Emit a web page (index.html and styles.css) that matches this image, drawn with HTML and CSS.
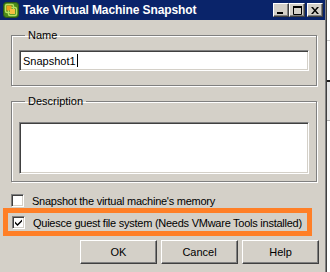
FILE: index.html
```html
<!DOCTYPE html>
<html lang="en">
<head>
    <meta charset="UTF-8">
    <title>Take Virtual Machine Snapshot</title>
    <link rel="stylesheet" href="styles.css">
</head>
<body>
    <div class="screen">
        <div class="window">
            <div class="titlebar">
                <svg class="app-icon" width="16" height="16" viewBox="0 0 16 16">
                    <rect x="0.5" y="0.5" width="15" height="15" rx="3" fill="#4a8a1c" stroke="#2e5a10"/>
                    <rect x="2.5" y="2.5" width="8" height="8" rx="1.5" fill="none" stroke="#b8e060" stroke-width="1.4"/>
                    <rect x="5.5" y="5.5" width="8" height="8" rx="1.5" fill="none" stroke="#b8e060" stroke-width="1.4"/>
                    <rect x="3.5" y="3.5" width="5" height="5" fill="#f0a020"/>
                    <rect x="7" y="7" width="5" height="5" fill="#f7c040"/>
                </svg>
                <span class="title">Take Virtual Machine Snapshot</span>
                <div class="caption-buttons">
                    <span class="cap-btn">
                        <svg width="8" height="8" viewBox="0 0 8 8"><rect x="0" y="6" width="6" height="2" fill="#000"/></svg>
                    </span>
                    <span class="cap-btn">
                        <svg width="9" height="9" viewBox="0 0 9 9"><path d="M0.5 1.5h8v7h-8z" fill="none" stroke="#000"/><rect x="0" y="0" width="9" height="2" fill="#000"/></svg>
                    </span>
                    <span class="cap-btn close">
                        <svg width="8" height="7" viewBox="0 0 8 7"><path d="M0 0h2l2 2.5 2-2.5h2l-3 3.5 3 3.5h-2l-2-2.5-2 2.5h-2l3-3.5z" fill="#000"/></svg>
                    </span>
                </div>
            </div>
            <div class="client">
                <fieldset class="group name-group">
                    <legend>Name</legend>
                    <div class="field">Snapshot1<span class="caret"></span></div>
                </fieldset>
                <fieldset class="group desc-group">
                    <legend>Description</legend>
                    <div class="field area"></div>
                </fieldset>
                <div class="check">
                    <span class="box"></span>
                    <span>Snapshot the virtual machine's memory</span>
                </div>
                <div class="highlight">
                    <div class="check">
                        <span class="box">
                            <svg width="7" height="7" viewBox="0 0 7 7"><path d="M0 2.5l2.5 2.5 4.5-4.5v2l-4.5 4.5-2.5-2.5z" fill="#000"/></svg>
                        </span>
                        <span>Quiesce guest file system (Needs VMware Tools installed)</span>
                    </div>
                </div>
                <div class="actions">
                    <span class="btn">OK</span>
                    <span class="btn">Cancel</span>
                    <span class="btn">Help</span>
                </div>
            </div>
        </div>
        <div class="backdrop"></div>
    </div>
</body>
</html>
```

FILE: styles.css
```css
body {
    margin: 0;
    font-family: "Liberation Sans", Arial, sans-serif;
    font-size: 11px;
    color: #000;
    background-color: #fff;
}
.screen {
    display: flex;
    height: 272px;
    overflow: hidden;
}
.window {
    width: 325px;
    height: 272px;
    background-color: #d4d0c8;
    border-right: 1px solid #404040;
    box-shadow: inset -1px 0 0 #808080;
    padding-right: 1px;
}
.backdrop {
    flex: 1;
    background: linear-gradient(#fff 0 40px, #c8c8c8 40px 41px, #fff 41px 80px, #202020 80px 82px, #e8e8e8 82px 120px, #b0b0b0 120px 121px, #fff 121px);
}
.titlebar {
    height: 20px;
    background-color: #0a246a;
    display: flex;
    align-items: center;
    padding-left: 3px;
}
.app-icon {
    margin-right: 4px;
}
.title {
    color: #fff;
    font-weight: bold;
    font-size: 12px;
    letter-spacing: -0.1px;
    flex: 1;
    white-space: nowrap;
}
.caption-buttons {
    display: flex;
    margin-right: 2px;
}
.cap-btn {
    width: 16px;
    height: 14px;
    box-sizing: border-box;
    background-color: #d4d0c8;
    border-top: 1px solid #fff;
    border-left: 1px solid #fff;
    border-right: 1px solid #404040;
    border-bottom: 1px solid #404040;
    box-shadow: inset -1px -1px 0 #808080;
    display: flex;
    align-items: center;
    justify-content: center;
}
.cap-btn.close {
    margin-left: 2px;
}
.client {
    padding: 9px 0 0 11px;
}
.group {
    width: 306px;
    box-sizing: border-box;
    margin: 0;
    border: 1px solid #808080;
    box-shadow: inset 1px 1px 0 #fff, 1px 1px 0 #fff;
    padding: 8px 7px 14px 7px;
}
.group legend {
    padding: 0 3px;
    margin-left: 6px;
    line-height: 13px;
}
.desc-group {
    margin-top: 9px;
    padding: 14px 7px 7px 7px;
}
.field {
    height: 21px;
    box-sizing: border-box;
    background-color: #fff;
    border-top: 1px solid #808080;
    border-left: 1px solid #808080;
    border-right: 1px solid #fff;
    border-bottom: 1px solid #fff;
    box-shadow: inset 1px 1px 0 #404040, inset -1px -1px 0 #d4d0c8;
    padding: 3px 4px 0 3px;
    line-height: 14px;
}
.field.area {
    height: 52px;
}
.caret {
    display: inline-block;
    width: 1px;
    height: 13px;
    background-color: #000;
    vertical-align: top;
    margin-left: 1px;
}
.check {
    display: flex;
    align-items: center;
    gap: 8px;
    height: 13px;
    margin-top: 12px;
    white-space: nowrap;
}
.check span:last-child {
    letter-spacing: -0.25px;
}
.box {
    width: 13px;
    height: 13px;
    flex-shrink: 0;
    box-sizing: border-box;
    background-color: #fff;
    border-top: 1px solid #808080;
    border-left: 1px solid #808080;
    border-right: 1px solid #fff;
    border-bottom: 1px solid #fff;
    box-shadow: inset 1px 1px 0 #404040, inset -1px -1px 0 #d4d0c8;
    display: flex;
    align-items: center;
    justify-content: center;
}
.highlight {
    width: 309px;
    box-sizing: border-box;
    margin: 1px 0 0 -8px;
    border: 5px solid #ff7f27;
    padding: 3px 0 2px 4px;
}
.highlight .check {
    margin-top: 0;
}
.actions {
    display: flex;
    gap: 4px;
    margin: 4px 0 0 69px;
}
.btn {
    width: 77px;
    height: 24px;
    box-sizing: border-box;
    border-top: 1px solid #fff;
    border-left: 1px solid #fff;
    border-right: 1px solid #404040;
    border-bottom: 1px solid #404040;
    box-shadow: inset -1px -1px 0 #808080;
    display: flex;
    align-items: center;
    justify-content: center;
}
```
